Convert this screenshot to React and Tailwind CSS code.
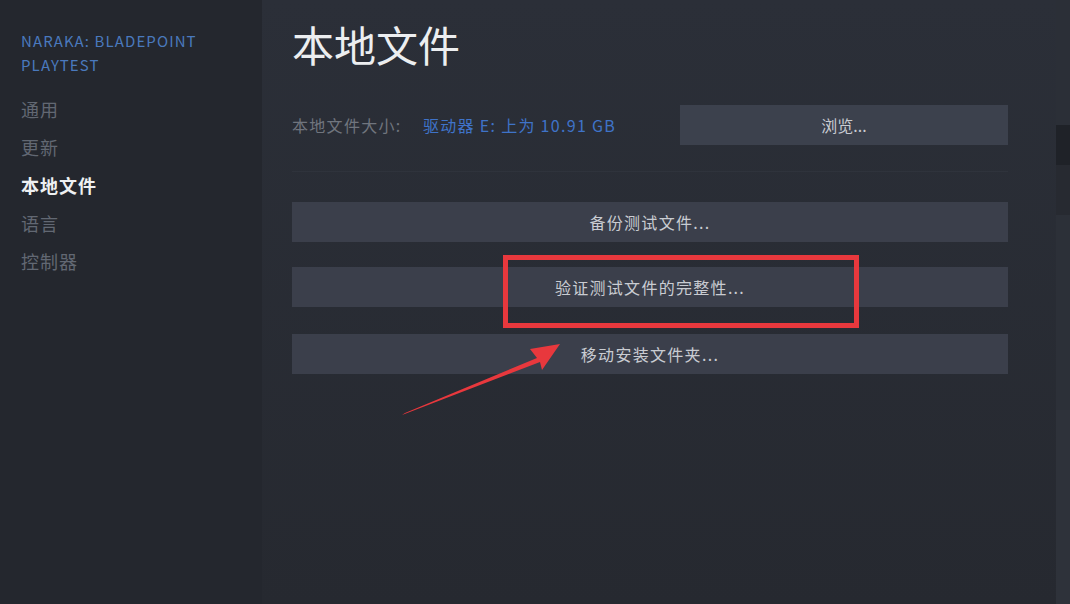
export default function App() {
  const font = { fontFamily: '"Noto Sans CJK SC", "Noto Sans", sans-serif' };
  const menu = ["通用", "更新", "本地文件", "语言", "控制器"];
  return (
    <div className="w-[1070px] h-[604px] flex overflow-hidden bg-[#24272e] relative" style={font}>
      <aside className="w-[262px] shrink-0 bg-[#24272e] pl-[21px] pt-[29px]">
        <div className="text-[15px] leading-[24px] text-[#4a79bd] tracking-[1.1px]">
          NARAKA: BLADEPOINT
          <br />
          PLAYTEST
        </div>
        <ul className="mt-[13px] flex flex-col">
          {menu.map((m) => (
            <li
              key={m}
              className={
                "h-[38px] flex items-center text-[18px] tracking-[1px] " +
                (m === "本地文件" ? "text-[#eef0f2] font-bold" : "text-[#626873]")
              }
            >
              {m}
            </li>
          ))}
        </ul>
      </aside>
      <main className="flex-1 bg-gradient-to-b from-[#2b2f38] to-[#262930] pl-[30px] pr-[48px] pt-[16px]">
        <h1 className="text-[42px] leading-[56px] text-[#eceef0] font-normal">本地文件</h1>
        <div className="mt-[33px] flex items-center h-[40px]">
          <span className="text-[16px] text-[#70757e] w-[131px] tracking-[1.3px]">本地文件大小:</span>
          <span className="text-[16px] text-[#3f73c8] tracking-[1.3px]">驱动器 E: 上为 10.91 GB</span>
          <button className="ml-auto w-[328px] h-[40px] bg-[#3c414d] text-[16px] text-[#c9ccd2]">浏览...</button>
        </div>
        <div className="mt-[26px] h-px bg-[#2f333c]" />
        <div className="mt-[30px] flex flex-col">
          <button className="h-[40px] bg-[#3b3f4b] text-[16px] tracking-[1.3px] text-[#c9ccd2]">备份测试文件...</button>
          <button className="mt-[25px] h-[40px] bg-[#3b3f4b] text-[16px] tracking-[1.3px] text-[#c9ccd2]">验证测试文件的完整性...</button>
          <button className="mt-[27px] h-[40px] bg-[#3b3f4b] text-[16px] tracking-[1.3px] text-[#c9ccd2]">移动安装文件夹...</button>
        </div>
      </main>
      <div className="w-[14px] shrink-0 flex flex-col">
        <div className="h-[125px] bg-[#2b2f37]" />
        <div className="h-[40px] bg-[#1f2228]" />
        <div className="h-[50px] bg-[#272a31]" />
        <div className="h-[195px] bg-[#2c3038]" />
        <div className="flex-1 bg-[#2e323a]" />
      </div>
      <div className="absolute left-[503px] top-[255px] w-[356px] h-[73px] border-[5px] border-[#e8383d]" />
      <svg className="absolute left-0 top-0" width="1070" height="604" viewBox="0 0 1070 604">
        <polygon points="402,415 405,413 537,358 530,349 560,344 542,370 540,362" fill="#e8383d" />
      </svg>
    </div>
  );
}
